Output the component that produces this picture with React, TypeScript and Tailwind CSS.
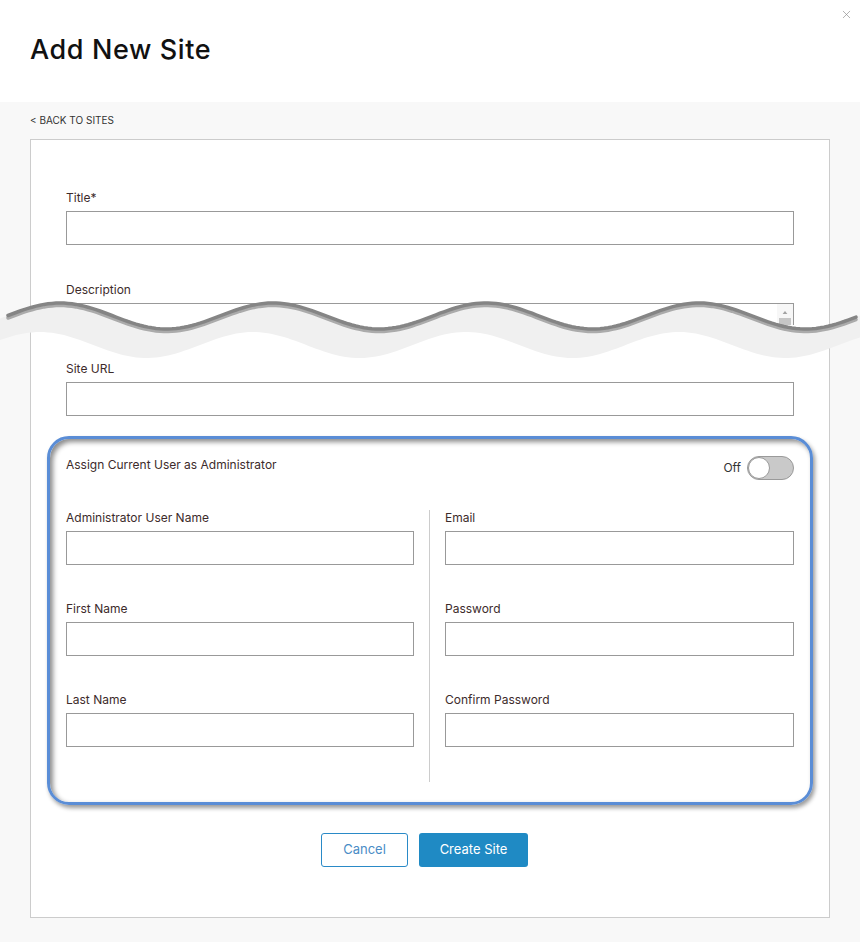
import { X } from 'lucide-react';

const labelCls = 'block text-[12px] leading-[15px] text-[#3d2b2b] mb-[6px]';
const inputCls = 'block w-full h-[34px] border border-[#999999] bg-white outline-none px-2 text-[13px]';

function Field({ label, type = 'text', last = false }: { label: string; type?: string; last?: boolean }) {
  return (
    <div className={last ? '' : 'mb-[36px]'}>
      <label className={labelCls}>{label}</label>
      <input type={type} className={inputCls} />
    </div>
  );
}

function Toggle() {
  return (
    <div className="flex items-center gap-[6px]">
      <span className="text-[12px] leading-[14px] text-[#333333]">Off</span>
      <button
        type="button"
        className="flex h-[24px] w-[47px] items-center rounded-full border border-[#9a9a9a] bg-[#c9c9c9] p-0"
      >
        <span className="h-[22px] w-[22px] rounded-full border border-[#9a9a9a] bg-white" />
      </button>
    </div>
  );
}

// torn paper break drawn across the description field
function WaveBreak() {
  const top = (x: number) => 316 - 13 * Math.cos((2 * Math.PI * (x - 60)) / 213);
  const bottom = (x: number) => top(x + 20) + 29;

  const upper: string[] = [];
  const lower: string[] = [];
  const line: string[] = [];
  for (let x = 0; x <= 860; x += 4) {
    upper.push(`${x},${top(x).toFixed(1)}`);
    lower.unshift(`${x},${bottom(x).toFixed(1)}`);
    if (x >= 8 && x <= 858) line.push(`${x},${top(x).toFixed(1)}`);
  }
  const band = `M${upper.join(' L')} L${lower.join(' L')} Z`;
  const stroke = `M${line.join(' L')}`;
  const shade = `M${line.map((p) => {
    const [x, y] = p.split(',');
    return `${x},${(Number(y) + 2.5).toFixed(1)}`;
  }).join(' L')}`;

  return (
    <svg
      className="pointer-events-none absolute left-0 top-0"
      width="860"
      height="942"
      viewBox="0 0 860 942"
    >
      <path d={band} fill="#f0f0f0" />
      <path d={shade} fill="none" stroke="#ababab" strokeWidth="3.5" strokeLinecap="round" />
      <path d={stroke} fill="none" stroke="#858585" strokeWidth="3.5" strokeLinecap="round" />
    </svg>
  );
}

export default function App() {
  return (
    <div className="relative min-h-[942px] w-full bg-[#f8f8f8] pb-[25px] font-['Inter','Liberation_Sans',sans-serif]">
      <header className="relative h-[102px] bg-white px-[30px] pt-[33px]">
        <h1 className="text-[27px] font-medium leading-[34px] tracking-[0.6px] text-[#111111]">Add New Site</h1>
        <button type="button" className="absolute right-[7px] top-[8px] text-[#8a8a8a]">
          <X size={13} strokeWidth={1.2} />
        </button>
      </header>

      <div className="px-[30px]">
        <div className="flex h-[37px] items-center text-[10px] uppercase text-[#333333]">&lt; Back to sites</div>

        <div className="border border-[#cccccc] bg-white px-[35px] pb-[50px] pt-[50px]">
          <div className="mb-[37px]">
            <label className={labelCls}>Title*</label>
            <input type="text" className={inputCls} />
          </div>

          <div className="mb-[36px]">
            <label className={labelCls}>Description</label>
            <div className="flex h-[22px] justify-end border border-b-0 border-[#999999] bg-white">
              <div className="flex w-[16px] flex-col items-center bg-[#f7f7f7]">
                <svg width="8" height="5" viewBox="0 0 8 5" className="mt-[7px]">
                  <path d="M4 0 L8 5 L0 5 Z" fill="#a3a3a3" />
                </svg>
                <div className="mt-[4px] h-[10px] w-[12px] bg-[#c6c6c6]" />
              </div>
            </div>
          </div>

          <Field label="Site URL" last />

          <div className="-mx-[19px] mt-[20px] rounded-[22px] border-[3px] border-[#5a8dd6] pb-[20px] pl-[16px] pr-[16px] pt-[17px] shadow-[inset_3px_3px_5px_rgba(0,0,0,0.45),2px_3px_4px_rgba(0,0,0,0.4)]">
            <div className="flex h-[24px] items-start justify-between">
              <span className="mt-[2px] text-[12px] leading-[14px] text-[#3d2b2b]">Assign Current User as Administrator</span>
              <Toggle />
            </div>

            <div className="mt-[30px] flex">
              <div className="w-[348px] pb-[35px]">
                <Field label="Administrator User Name" />
                <Field label="First Name" />
                <Field label="Last Name" last />
              </div>
              <div className="mx-[15px] w-px bg-[#cccccc]" />
              <div className="flex-1 pb-[35px]">
                <Field label="Email" type="email" />
                <Field label="Password" type="password" />
                <Field label="Confirm Password" type="password" last />
              </div>
            </div>
          </div>

          <div className="mt-[28px] flex justify-center gap-[11px] pr-[11px]">
            <button
              type="button"
              className="h-[34px] w-[87px] rounded-[3px] border border-[#2a8ac7] bg-white text-[13px] text-[#4a8cc6]"
            >
              Cancel
            </button>
            <button
              type="button"
              className="h-[34px] w-[109px] rounded-[3px] bg-[#1f8ac4] text-[13px] text-white"
            >
              Create Site
            </button>
          </div>
        </div>
      </div>

      <WaveBreak />
    </div>
  );
}
